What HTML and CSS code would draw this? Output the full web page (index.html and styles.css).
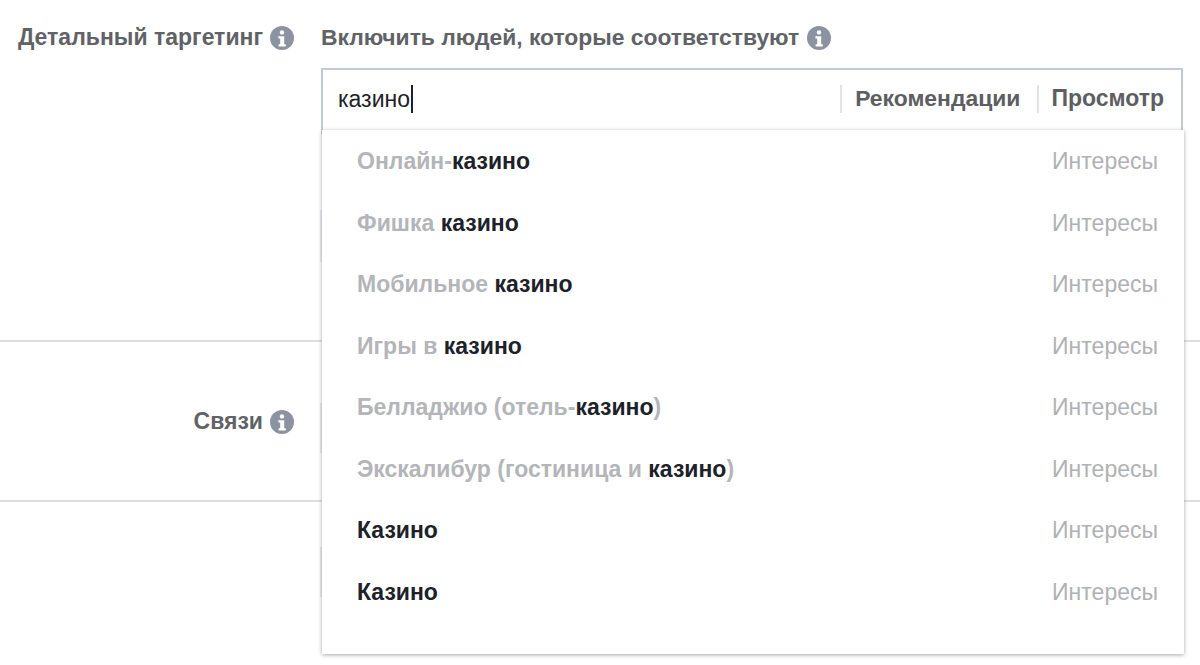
FILE: index.html
```html
<!DOCTYPE html>
<html lang="ru">
<head>
<meta charset="utf-8">
<title>Детальный таргетинг</title>
<link rel="stylesheet" href="styles.css">
</head>
<body>
<svg class="defs" width="0" height="0" aria-hidden="true">
  <symbol id="info" viewBox="0 0 24 24">
    <circle cx="12" cy="12" r="12" fill="#8b93a1"/>
    <circle cx="12" cy="6.4" r="2.2" fill="#fff"/>
    <path d="M8.4 10.2H14.2v8h1.6v2.4H8.6v-2.4h1.6v-5.6H8.4z" fill="#fff"/>
  </symbol>
</svg>
<main class="page">
  <section class="row row-targeting">
    <div class="label"><span>Детальный таргетинг</span><svg class="icon"><use href="#info"/></svg></div>
    <div class="field">
      <div class="field-title"><span>Включить людей, которые соответствуют</span><svg class="icon"><use href="#info"/></svg></div>
      <div class="search">
        <div class="query">казино<span class="caret"></span></div>
        <div class="tab tab-first">Рекомендации</div>
        <div class="tab tab-last">Просмотр</div>
      </div>
    </div>
  </section>
  <section class="row row-links">
    <div class="label"><span>Связи</span><svg class="icon"><use href="#info"/></svg></div>
  </section>
  <span class="edge edge-a"></span>
  <span class="edge edge-b"></span>
  <span class="edge edge-c"></span>
  <ul class="dropdown">
    <li class="option"><span class="name">Онлайн-<b>казино</b></span><span class="type">Интересы</span></li>
    <li class="option"><span class="name">Фишка <b>казино</b></span><span class="type">Интересы</span></li>
    <li class="option"><span class="name">Мобильное <b>казино</b></span><span class="type">Интересы</span></li>
    <li class="option"><span class="name">Игры в <b>казино</b></span><span class="type">Интересы</span></li>
    <li class="option"><span class="name">Белладжио (отель-<b>казино</b>)</span><span class="type">Интересы</span></li>
    <li class="option"><span class="name">Экскалибур (гостиница и <b>казино</b>)</span><span class="type">Интересы</span></li>
    <li class="option"><span class="name"><b>Казино</b></span><span class="type">Интересы</span></li>
    <li class="option"><span class="name"><b>Казино</b></span><span class="type">Интересы</span></li>
  </ul>
</main>
</body>
</html>
```
FILE: styles.css
```css
* { box-sizing: border-box; }
html, body { margin: 0; height: 100%; background: #fff; overflow: hidden; }
body { font-family: "Liberation Sans", Arial, sans-serif; }
.defs { position: absolute; }
.page { position: relative; width: 1200px; height: 665px; }
.row { display: flex; border-bottom: 2px solid #dcdee1; }
.row-targeting { height: 342px; padding-top: 23px; }
.row-links { height: 160px; padding-top: 65px; }
.label {
  width: 294px; height: 28px; flex: none;
  display: flex; justify-content: flex-end; align-items: center; gap: 7px;
  font-size: 23px; font-weight: 700; color: #606266;
}
.icon { width: 24px; height: 24px; flex: none; margin-top: 2px; }
.field { margin-left: 27px; width: 862px; }
.field-title {
  height: 28px; display: flex; align-items: center; gap: 8px;
  font-size: 22.85px; font-weight: 700; color: #606266;
}
.search {
  margin-top: 17px; height: 66px;
  display: flex; align-items: center;
  border: 2px solid #c2cad7; border-bottom: 0; padding: 0 17px 6px 15px;
}
.query { flex: 1; font-size: 23px; color: #1d2129; display: flex; align-items: center; }
.caret { width: 2px; height: 28px; background: #1d2129; margin-left: 1px; }
.tab {
  height: 28px; line-height: 26px; font-size: 23px; font-weight: 700; color: #5c5e62;
  border-left: 2px solid #e2e3e6; padding-left: 13px; margin-left: 17px;
}
.tab-first { font-size: 22.9px; }
.tab-last { padding-left: 12px; }
.edge { position: absolute; left: 320px; width: 2px; background: #eceef0; }
.edge-a { top: 210px; height: 52px; }
.edge-b { top: 403px; height: 50px; }
.edge-c { top: 547px; height: 50px; }
.dropdown {
  position: absolute; left: 322px; top: 130px; width: 862px; height: 524px;
  margin: 0; padding: 1px 26px 0 35px; list-style: none; background: #fff;
  box-shadow: 0 1px 4px rgba(60, 65, 75, 0.45);
}
.option {
  height: 61.5px; display: flex; justify-content: space-between; align-items: center;
  font-size: 23px;
}
.name { font-weight: 700; color: #b3b5b8; }
.name b { color: #1d2129; }
.type { color: #b0b1b4; }
```
